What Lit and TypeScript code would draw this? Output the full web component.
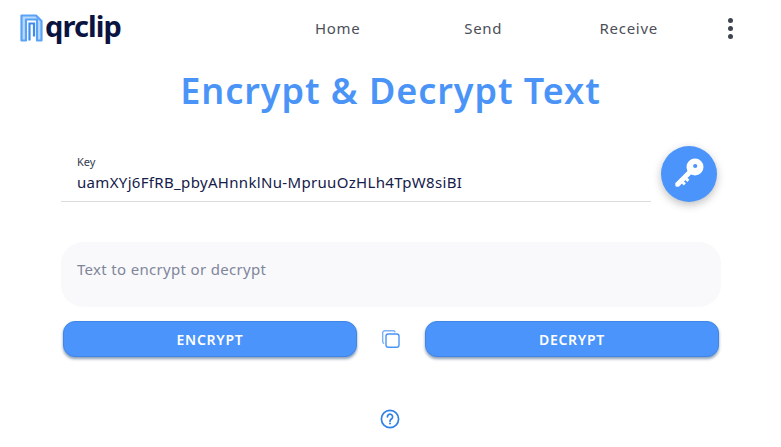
import { LitElement, css, html } from 'lit';
import { customElement } from 'lit/decorators.js';

@customElement('app-root')
export class AppRoot extends LitElement {
  static styles = css`
    :host {
      display: block;
      width: 781px;
      height: 447px;
      overflow: hidden;
      background: #fff;
      font-family: 'Noto Sans', 'Open Sans', sans-serif;
      color: #0e1a3c;
    }

    * {
      box-sizing: border-box;
    }

    .header {
      display: flex;
      align-items: center;
      height: 56px;
      padding-left: 20px;
    }

    .logo {
      display: flex;
      align-items: center;
      width: 245px;
      gap: 2px;
    }

    .logo-text {
      font-size: 29px;
      font-weight: 700;
      line-height: 32px;
      letter-spacing: -0.9px;
      color: #0b1440;
      margin-top: -4px;
    }

    .nav {
      display: flex;
    }

    .nav a {
      width: 145.5px;
      text-align: center;
      font-size: 15px;
      letter-spacing: 0.7px;
      color: #4b4f58;
    }

    .more {
      display: flex;
      flex-direction: column;
      gap: 3px;
      margin-left: 26px;
    }

    .more span {
      width: 5px;
      height: 5px;
      border-radius: 50%;
      background: #3f4550;
    }

    h1 {
      margin: 11px 0 0;
      text-align: center;
      font-size: 36px;
      line-height: 48px;
      font-weight: 600;
      color: #4a94f8;
      letter-spacing: 0.95px;
    }

    .key-row {
      display: flex;
      margin: 30px 0 0 61px;
      width: 656px;
      justify-content: space-between;
    }

    .key-field {
      width: 590px;
      height: 57px;
      border-bottom: 1px solid #dcdcdc;
      padding: 10px 16px 0;
    }

    .key-label {
      font-size: 11px;
      line-height: 14px;
      color: #333a4d;
    }

    .key-value {
      font-size: 15px;
      line-height: 24px;
      margin-top: 1px;
      letter-spacing: 0.33px;
      color: #14204a;
      white-space: nowrap;
    }

    .fab {
      width: 56px;
      height: 56px;
      margin-top: 1px;
      border-radius: 50%;
      background: #4a94fb;
      display: flex;
      align-items: center;
      justify-content: center;
      box-shadow: 0 3px 8px rgba(0, 0, 0, 0.25);
    }

    .text-area {
      margin: 40px 0 0 61px;
      width: 660px;
      height: 65px;
      border-radius: 22px;
      background: #f9f9fc;
      padding: 16px 16px;
      font-size: 15px;
      line-height: 22px;
      letter-spacing: 0.32px;
      color: #80869a;
    }

    .actions {
      display: flex;
      align-items: center;
      margin: 14px 0 0 63px;
      width: 656px;
    }

    .btn {
      width: 294px;
      height: 36px;
      border-radius: 12px;
      background: #4a94fb;
      border: 1px solid #3f86e6;
      color: #fff;
      font-size: 14px;
      font-weight: 600;
      letter-spacing: 0.7px;
      display: flex;
      align-items: center;
      justify-content: center;
      box-shadow: 0 2px 3px rgba(0, 40, 90, 0.45);
    }

    .copy {
      flex: 1;
      display: flex;
      justify-content: center;
    }

    .help {
      display: flex;
      justify-content: center;
      margin-top: 52px;
      margin-left: -2px;
    }
  `;

  render() {
    return html`
      <div class="header">
        <div class="logo">
          <svg width="23" height="28" viewBox="0 0 23 28" fill="none">
            <path d="M1.5 26.5V1.5h14.5l5.5 5.5v19.5h-4.5V5.5H6v21z" fill="#b9dafb" stroke="#5aa2f6" stroke-width="2.2" stroke-linejoin="round"/>
            <path d="M9.5 26.5V9.5h4.5v13" stroke="#3f8cf0" stroke-width="2.2"/>
          </svg>
          <span class="logo-text">qrclip</span>
        </div>
        <nav class="nav">
          <a>Home</a>
          <a>Send</a>
          <a>Receive</a>
        </nav>
        <div class="more"><span></span><span></span><span></span></div>
      </div>

      <h1>Encrypt &amp; Decrypt Text</h1>

      <div class="key-row">
        <div class="key-field">
          <div class="key-label">Key</div>
          <div class="key-value">uamXYj6FfRB_pbyAHnnklNu-MpruuOzHLh4TpW8siBI</div>
        </div>
        <div class="fab">
          <svg width="34" height="34" viewBox="0 0 34 34">
            <g transform="translate(23 10) rotate(135)" fill="#fff">
              <circle r="8.5"/>
              <path d="M5 -2.5H25.5L27.5 0 25.5 2.5H5zM13 -2.5h3v-2.6h-3zM18 -2.5h3v-2.6h-3z"/>
            </g>
            <circle cx="23.2" cy="9" r="2.1" fill="#4a94fb"/>
          </svg>
        </div>
      </div>

      <div class="text-area">Text to encrypt or decrypt</div>

      <div class="actions">
        <div class="btn">ENCRYPT</div>
        <div class="copy">
          <svg width="20" height="20" viewBox="0 0 20 20" fill="none" stroke="#4a94f8" stroke-width="1.4">
            <path d="M3.2 14.5a2 2 0 0 1-1.5-2V3.8a2 2 0 0 1 2-2h8.5a2 2 0 0 1 2 1.5" stroke="#7db2f5"/>
            <rect x="5" y="5" width="13" height="13.2" rx="2.2"/>
          </svg>
        </div>
        <div class="btn">DECRYPT</div>
      </div>

      <div class="help">
        <svg width="20" height="20" viewBox="0 0 20 20" fill="none" stroke="#2f80e8" stroke-width="1.7">
          <circle cx="10" cy="10" r="8.6"/>
          <path d="M7.4 7.8a2.6 2.6 0 1 1 4 2.2c-.9.6-1.4 1-1.4 2.2" stroke-linecap="round"/>
          <circle cx="10" cy="14.6" r="1" fill="#2f80e8" stroke="none"/>
        </svg>
      </div>
    `;
  }
}
